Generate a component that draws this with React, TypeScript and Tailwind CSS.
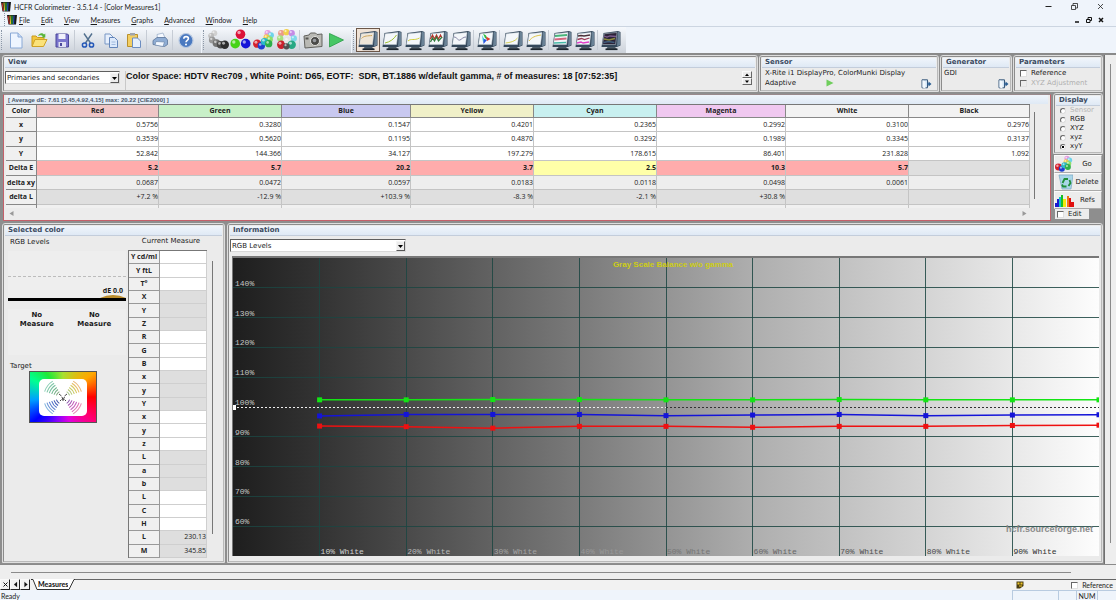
import React from "react";

const ui = "font-['DejaVu_Sans',sans-serif]";
const seg = "font-['Open_Sans',sans-serif]";
const chrome = "font-['Lato',sans-serif]";

function Bars() {
  return (
    <svg width="10" height="11" viewBox="0 0 10 11" aria-hidden="true">
      <path d="M0 1h10l-1 9.500H1.500z" fill="#151515" />
      <path d="M1 2l1.500 8" stroke="#c33" strokeWidth="1" />
      <path d="M3 1.500L3.600 10" stroke="#e8c92c" strokeWidth="1" />
      <path d="M5 1.500V10" stroke="#2fae3b" strokeWidth="1.200" />
      <path d="M7 1.500L6.600 10" stroke="#2d5bd6" strokeWidth="1" />
    </svg>
  );
}

function Ball({ x, y, r, c }: { x: number; y: number; r: number; c: string }) {
  return (
    <g>
      <circle cx={x} cy={y} r={r} fill={c} />
      <circle cx={x - r * 0.3} cy={y - r * 0.35} r={r * 0.35} fill="#fff" opacity="0.6" />
    </g>
  );
}

type BallSpec = [number, number, number, string];
const grayBalls: BallSpec[] = [
  [7, 4, 2.8, "#d0d0d0"], [4, 6.5, 2.8, "#bcbcbc"], [5, 10.5, 3.2, "#989898"],
  [9, 13.5, 3.6, "#747474"], [13, 15, 3.6, "#4c4c4c"], [17, 15, 4, "#2d2d2d"],
];
const rgbBalls: BallSpec[] = [
  [10, 5, 4.6, "#dc1238"], [5, 14, 4.6, "#45d316"], [15, 14, 4.6, "#1414d8"],
];
const mixBalls: BallSpec[] = [
  [14, 4, 3, "#e59be0"], [17, 6, 3, "#6fd3ea"], [13, 8, 3, "#f3c84a"], [16, 10, 3, "#8de06b"],
  [4, 14, 4, "#d61f2c"], [8, 16, 3.5, "#1f3fd0"], [11, 12, 3.5, "#2bb8c8"], [15, 14, 3.5, "#2faf4a"],
];
const ringBalls: BallSpec[] = [
  [5, 4, 3, "#eb9a8c"], [10, 3, 3, "#f2d04b"], [15, 4, 3, "#c58be6"], [4, 9, 3, "#a7e07f"],
  [17, 9, 3, "#7fd8ea"], [5, 15, 4, "#c9202c"], [11, 11, 3.5, "#e6e6e6"], [15, 15, 4, "#27a884"], [10, 16.5, 3, "#515151"],
];

function Balls({ list, w = 22 }: { list: BallSpec[]; w?: number }) {
  return (
    <svg width={w} height={w} viewBox="0 0 21 21" aria-hidden="true">
      {list.map(([x, y, r, c], i) => <Ball key={i} x={x} y={y} r={r} c={c} />)}
    </svg>
  );
}

function Monitor({ fill = "#f4f7fa", children }: { fill?: string; children?: React.ReactNode }) {
  return (
    <svg width="20" height="21" viewBox="0 0 20 21" aria-hidden="true">
      <path d="M2.500 3L17 1L19.500 2v13.500L16 17H0.500z" fill="#34475a" />
      <path d="M17 1.500L19 2.500V15L16 16.500z" fill="#6a8296" />
      <path d="M3.200 3.800L16 2.500L14.500 14.500H1.500z" fill={fill} stroke="#c5d0d9" strokeWidth="0.500" />
      <path d="M6.500 17h7.500l2.500 2.500H5z" fill="#4a5965" />
      <path d="M4.500 19.300h12" stroke="#1c252d" strokeWidth="1.600" />
      {children}
    </svg>
  );
}

const stroke = (d: string, c: string, w = 1) => <path d={d} fill="none" stroke={c} strokeWidth={w} />;

const icons = {
  file: (
    <svg width="20" height="20" viewBox="0 0 20 20">
      <path d="M4.500 3h7.500l4 4v11h-11.500z" fill="#eef5ff" stroke="#8aa9d6" />
      <path d="M12 3v4h4" fill="#c9dbf5" stroke="#8aa9d6" />
    </svg>
  ),
  open: (
    <svg width="20" height="20" viewBox="0 0 20 20">
      <path d="M3 16V6h4l1.500 1.500H15V10" fill="#f2c63d" stroke="#c99a1c" />
      <path d="M3 16.500L6 9.500h12L14.500 16.500z" fill="#fbe27a" stroke="#cfa227" />
      <path d="M9 6c1.500-3.500 4.500-3.500 6-1.500l1.300-1V7.500H12.500l1.300-1.300C12.500 4.800 11 5 9 6z" fill="#58b53b" />
    </svg>
  ),
  save: (
    <svg width="20" height="20" viewBox="0 0 20 20">
      <path d="M4 4h11.500l1 1v12H4z" fill="#7a75cd" stroke="#4b479a" />
      <path d="M6.500 4h7v5h-7z" fill="#f0f1fb" />
      <path d="M6.500 12h7.500v5H6.500z" fill="#dfe0f3" />
      <path d="M8 13h2v3H8z" fill="#4b479a" />
    </svg>
  ),
  cut: (
    <svg width="20" height="20" viewBox="0 0 20 20">
      {stroke("M6 3.500L12.500 13M14 3.500L7.500 13", "#52708f", 1.4)}
      <circle cx="6.500" cy="15" r="2.100" fill="none" stroke="#2558b8" strokeWidth="1.500" />
      <circle cx="13.500" cy="15" r="2.100" fill="none" stroke="#2558b8" strokeWidth="1.500" />
    </svg>
  ),
  copy: (
    <svg width="20" height="20" viewBox="0 0 20 20">
      <path d="M4 4h5l3 3v7H4z" fill="#e6effc" stroke="#7897c5" />
      <path d="M8.500 7.500h5L16.500 10.500v7h-8z" fill="#dce9fb" stroke="#6385ba" />
      {stroke("M10.500 12h4M10.500 14.500h4", "#90add8", 0.8)}
    </svg>
  ),
  paste: (
    <svg width="20" height="20" viewBox="0 0 20 20">
      <path d="M3.500 4.500h10v12h-10z" fill="#f3ce62" stroke="#b9902c" />
      <path d="M6 3h5v2.500H6z" fill="#9fa5ac" />
      <path d="M8.500 8h5l3 3v6.500h-8z" fill="#e5effc" stroke="#6c8dc0" />
    </svg>
  ),
  print: (
    <svg width="20" height="20" viewBox="0 0 20 20">
      <path d="M7 4.500l6-1.500 2 5H7.500z" fill="#f5f9ff" stroke="#92a8c4" strokeWidth="0.700" />
      <path d="M3 10.500l4-3h8.500l2 2.500v4.500l-3 2-11.500-2z" fill="#8fadd4" stroke="#5c7599" strokeWidth="0.800" />
      <path d="M6 11.500l8.500 0.500-1.500 4.500-8-1.500z" fill="#f3f8ff" stroke="#6e88ab" strokeWidth="0.700" />
    </svg>
  ),
  help: (
    <svg width="20" height="20" viewBox="0 0 20 20">
      <circle cx="10" cy="10.500" r="7" fill="#4a79c0" stroke="#b9c9e0" strokeWidth="1.200" />
      {stroke("M7.800 8.800C7.800 5.800 12.400 6 12.400 8.600C12.400 10.400 10 10.200 10 12.200", "#fff", 1.6)}
      <circle cx="10" cy="14.500" r="1" fill="#fff" />
    </svg>
  ),
  camera: (
    <svg width="22" height="20" viewBox="0 0 22 20">
      <path d="M2 6l5-1 1.500-2h5L15 4.500l5-0.500v12.500L3 18z" fill="#b9b9b4" stroke="#62625e" />
      <circle cx="13" cy="11" r="4.500" fill="#4a4a48" stroke="#e2e2de" />
      <circle cx="12.500" cy="10.500" r="1.800" fill="#989ba0" />
      <path d="M3.500 7.500h3v2h-3z" fill="#565652" />
    </svg>
  ),
  play: (
    <svg width="20" height="20" viewBox="0 0 20 20">
      <path d="M3.500 3.500L17.500 10L3.500 17z" fill="#47c765" stroke="#2a9c46" strokeWidth="0.800" />
    </svg>
  ),
};

function Tool({ label, wide, active, children }: { label: string; wide?: boolean; active?: boolean; children: React.ReactNode }) {
  return (
    <button
      type="button"
      aria-label={label}
      className={`flex h-[24px] shrink-0 items-center justify-center ${wide ? "w-6" : "w-[23px]"} ${active ? "border border-[#6b5648] bg-[#efe2d6]" : ""}`}
    >
      {children}
    </button>
  );
}
const Sep = () => <div className="mx-px h-5 w-px shrink-0 bg-[#c6ccd5]" />;
const Grip = () => <div className="mr-[2px] ml-px h-5 w-px shrink-0 border-l border-dotted border-[#8c98a8]" />;

function Band({ children }: { children: React.ReactNode }) {
  return <div className="flex h-full items-center bg-linear-to-b from-[#f6f9fd] to-[#ccd2da] pr-1">{children}</div>;
}

function Panel({ title, className = "", children }: { title: string; className?: string; children: React.ReactNode }) {
  return (
    <section aria-label={title} className={`flex flex-col rounded-t-[2px] border border-[#8c8c8c] border-r-[#b9b9b9] border-b-[#b9b9b9] bg-[#ebebeb] p-px outline outline-1 outline-[#dedede] ${className}`}>
      <h2 className={`${ui} h-[10px] shrink-0 border-b border-[#c3cddb] bg-linear-to-b from-[#f0f5fb] to-[#dfe9f5] pl-[3px] text-[7px] leading-[9px] font-bold whitespace-nowrap text-[#3b4a60]`}>
        {title}
      </h2>
      {children}
    </section>
  );
}

function Pick({ label, value, className }: { label: string; value: string; className: string }) {
  return (
    <div className={`relative ${className}`}>
      <select aria-label={label} defaultValue={value} className={`${ui} block h-[13px] w-full appearance-none border border-[#d8d8d8] border-t-[#5f5f5f] border-l-[#5f5f5f] bg-white pl-px text-[7px] leading-[10px] text-[#222]`}>
        <option>{value}</option>
      </select>
      <span className="pointer-events-none absolute top-[2px] right-[1px] flex h-[10px] w-[9px] items-center justify-center border border-[#f5f5f5] border-r-[#555] border-b-[#555] bg-[#ececec]">
        <svg width="5" height="3" viewBox="0 0 5 3"><path d="M0 0h5L2.500 3z" fill="#000" /></svg>
      </span>
    </div>
  );
}

function Check({ label, disabled }: { label: string; disabled?: boolean }) {
  return (
    <label className={`${ui} flex h-[10px] items-center gap-1 pl-1 text-[7px] whitespace-nowrap ${disabled ? "text-[#b0b0b0]" : "text-[#1a1a1a]"}`}>
      <input type="checkbox" disabled={disabled} className="h-[7px] w-[7px] appearance-none border border-[#e0e0e0] border-t-[#666] border-l-[#666] bg-white checked:bg-[#333] disabled:bg-[#ececec]" />
      {label}
    </label>
  );
}

function Door() {
  return (
    <button type="button" aria-label="Configure" className="block h-[10px] w-[11px]">
      <svg width="11" height="10" viewBox="0 0 11 10">
        <path d="M1 0.800h5.500v8H1z" fill="#d5e6f6" stroke="#39597b" />
        <path d="M1.500 1.200l3 1.300v7L1.500 8.500z" fill="#f2f8fd" />
        <path d="M6 5h2.500" stroke="#2c5f94" strokeWidth="1.400" />
        <path d="M7.500 2.600L10.500 5L7.500 7.400z" fill="#2c5f94" />
      </svg>
    </button>
  );
}

const heads: [string, string][] = [
  ["Red", "bg-[#f0c6c6]"], ["Green", "bg-[#c8f0c8]"], ["Blue", "bg-[#c8c8f0]"], ["Yellow", "bg-[#f0f0c8]"],
  ["Cyan", "bg-[#c8f0f0]"], ["Magenta", "bg-[#f0c8f0]"], ["White", "bg-[#f2f2f2]"], ["Black", "bg-[#f2f2f2]"],
];
const rows: { name: string; tone: string; values: string[] }[] = [
  { name: "x", tone: "bg-white", values: ["0.5756", "0.3280", "0.1547", "0.4201", "0.2365", "0.2992", "0.3100", "0.2976"] },
  { name: "y", tone: "bg-white", values: ["0.3539", "0.5620", "0.1195", "0.4870", "0.3292", "0.1989", "0.3345", "0.3137"] },
  { name: "Y", tone: "bg-white", values: ["52.842", "144.366", "34.127", "197.279", "178.615", "86.401", "231.828", "1.092"] },
  { name: "Delta E", tone: "bg-[#ffacac] font-bold", values: ["5.2", "5.7", "20.2", "3.7", "2.5", "10.3", "5.7", ""] },
  { name: "delta xy", tone: "bg-[#eeeeee]", values: ["0.0687", "0.0472", "0.0597", "0.0183", "0.0118", "0.0498", "0.0061", ""] },
  { name: "delta L", tone: "bg-[#dfdfdf]", values: ["+7.2 %", "-12.9 %", "+103.9 %", "-8.3 %", "-2.1 %", "+30.8 %", "", ""] },
];
function cellTone(name: string, tone: string, i: number) {
  if (name !== "Delta E") return tone;
  if (i === 4) return "bg-[#ffffa8] font-bold";
  if (i === 7) return "bg-[#dfdfdf]";
  return tone;
}

function MeasureTable() {
  return (
    <table className={`${seg} w-full table-fixed border-separate border-spacing-0 border-t border-[#777] text-[7px] text-[#222]`}>
      <colgroup>
        <col className="w-[31px]" /><col className="w-[122px]" /><col className="w-[123px]" /><col className="w-[129px]" /><col className="w-[123px]" />
        <col className="w-[123px]" /><col className="w-[129px]" /><col className="w-[123px]" /><col className="w-[121px]" />
      </colgroup>
      <thead>
        <tr className="h-[13px]">
          <th className="border-r border-b border-[#888] bg-[#f0f0f0] p-0 leading-3">Color</th>
          {heads.map(([h, c]) => <th key={h} className={`border-r border-b border-[#888] p-0 leading-3 ${c}`}>{h}</th>)}
        </tr>
      </thead>
      <tbody>
        {rows.map((r, k) => (
          <tr key={k} className={k % 2 ? "h-[15px]" : "h-[14px]"}>
            <th className="border-r border-b border-[#888] bg-[#f0f0f0] p-0 leading-3 whitespace-nowrap">{r.name}</th>
            {r.values.map((v, i) => (
              <td key={i} className={`border-r border-b border-[#c4c4c4] p-0 text-right leading-3 ${cellTone(r.name, r.tone, i)}`}>{v}</td>
            ))}
          </tr>
        ))}
        <tr className="h-[3px]">
          <th className="border-r border-[#888] bg-[#f0f0f0] p-0" />
          {heads.map(([h]) => <td key={h} className="border-r border-[#c4c4c4] bg-[#f0f0f0] p-0" />)}
        </tr>
      </tbody>
    </table>
  );
}

const current: [string, boolean, string][] = [
  ["Y cd/ml", false, ""], ["Y ftL", false, ""], ["T°", false, ""], ["X", true, ""], ["Y", true, ""], ["Z", true, ""],
  ["R", false, ""], ["G", false, ""], ["B", false, ""], ["x", true, ""], ["y", true, ""], ["Y", true, ""],
  ["x", false, ""], ["y", false, ""], ["z", false, ""], ["L", true, ""], ["a", true, ""], ["b", true, ""],
  ["L", false, ""], ["C", false, ""], ["H", false, ""], ["L", true, "230.13"], ["M", true, "345.85"],
];

function CurrentTable() {
  return (
    <table className={`${seg} h-[308px] w-[79px] table-fixed border-separate border-spacing-0 border-t border-l border-[#777] text-[7px] text-[#222]`}>
      <colgroup><col className="w-[31px]" /><col /></colgroup>
      <tbody>
        {current.map(([n, dim, v], i) => (
          <tr key={i}>
            <th className="border-r border-b border-[#999] bg-[#f0f0f0] p-0 leading-3 whitespace-nowrap">{n}</th>
            <td className={`border-r border-b border-[#cfcfcf] p-0 text-right leading-3 ${dim ? "bg-[#dedede]" : "bg-white"}`}>{v}</td>
          </tr>
        ))}
      </tbody>
    </table>
  );
}

function Target() {
  const arcs = [0, 1, 2, 3, 4, 5];
  const quads: [number, string[]][] = [
    [-38, ["#e8b878", "#e8c068", "#d8c860", "#c8cc68", "#b8c878", "#a8c890"]],
    [38, ["#e890b8", "#e070b8", "#c868c0", "#c058b8", "#a858b8", "#905cb0"]],
    [142, ["#88b8e0", "#7098d8", "#6080d0", "#5070c8", "#4860b8", "#4858a8"]],
    [218, ["#90d0b8", "#80c8a8", "#78c0a0", "#70b890", "#78b088", "#80a880"]],
  ];
  return (
    <div className="flex h-[52px] w-[68px] items-center justify-center border border-[#555] bg-[conic-gradient(from_0deg_at_50%_50%,#a8e030,#ffa800_52deg,#ff0000_90deg,#ff0078_128deg,#e000e0_165deg,#8000ff_195deg,#0000ff_230deg,#00a0ff_265deg,#00ff90_300deg,#20e838_325deg,#a8e030)]">
      <svg width="48" height="37" viewBox="0 0 48 37" className="rounded-[5px] bg-white" aria-label="Target">
        {quads.map(([rot, cs]) => (
          <g key={rot} transform={`translate(24 18.500) rotate(${rot})`}>
            {arcs.map((a) => {
              const r = 7 + a * 2.5;
              return <path key={a} d={`M${r * 0.93} ${-r * 0.34}A${r} ${r} 0 0 1 ${r * 0.93} ${r * 0.34}`} fill="none" stroke={cs[5 - a]} strokeWidth="1.100" />;
            })}
          </g>
        ))}
        <path d="M20 15l2.500 2M28 15l-2.500 2M21 22l1.500-1.500M27 22l-1.500-1.500M23 18l1 3 1.500-3M24 21v1" fill="none" stroke="#333" strokeWidth="0.900" />
      </svg>
    </div>
  );
}

const series: [string, number[]][] = [
  ["#ee1111", [93.6, 93.4, 92.9, 93.5, 93.5, 93.2, 93.5, 93.5, 93.8, 93.9]],
  ["#1414d8", [97, 97.5, 97.5, 97.5, 97.1, 97.3, 97.5, 97.1, 97.3, 97.4]],
  ["#14e414", [102.4, 102.4, 102.5, 102.5, 102.4, 102.4, 102.5, 102.4, 102.4, 102.4]],
];
const tens = [1, 2, 3, 4, 5, 6, 7, 8, 9];
const axisInk = ["#d0d0d0", "#b8b8b8", "#a4a4a4", "#989898", "#757575", "#666666", "#505050", "#484848", "#303030"];
const py = (v: number) => `${150 - v}%`;

function Chart() {
  return (
    <svg className="min-h-[298px] w-full flex-1" role="img" aria-label="Gray Scale Balance w/o gamma">
      <defs>
        <linearGradient id="ramp">
          <stop offset="0" stopColor="#1e1e1e" />
          <stop offset="0.1" stopColor="#333" />
          <stop offset="0.2" stopColor="#4a4a4a" />
          <stop offset="0.4" stopColor="#7a7a7a" />
          <stop offset="0.6" stopColor="#aeaeae" />
          <stop offset="0.8" stopColor="#d4d4d4" />
          <stop offset="1" stopColor="#fdfdfd" />
        </linearGradient>
      </defs>
      <rect width="100%" height="100%" fill="url(#ramp)" />
      {tens.map((t) => (
        <g key={t} stroke="#1c4642" strokeWidth="1" opacity="0.85" shapeRendering="crispEdges">
          <line x1={`${t * 10}%`} x2={`${t * 10}%`} y1="0" y2="100%" />
          {t !== 5 && <line x1="0" x2="100%" y1={`${t * 10}%`} y2={`${t * 10}%`} />}
        </g>
      ))}
      <line x1="0" x2="50%" y1="50%" y2="50%" stroke="#eee" strokeDasharray="2 2" shapeRendering="crispEdges" />
      <line x1="50%" x2="100%" y1="50%" y2="50%" stroke="#333" strokeDasharray="2 2" shapeRendering="crispEdges" />
      <svg x="0" y="50%" overflow="visible"><rect y="-2" width="3" height="5" fill="#fff" /></svg>
      {series.map(([c, vs]) => (
        <g key={c} stroke={c} fill={c}>
          {vs.slice(1).map((v, i) => (
            <line key={i} x1={`${(i + 1) * 10}%`} y1={py(vs[i])} x2={`${(i + 2) * 10}%`} y2={py(v)} strokeWidth="1.500" />
          ))}
          {vs.map((v, i) => (
            <svg key={i} x={`${(i + 1) * 10}%`} y={py(v)} overflow="visible"><rect x="-2.500" y="-2.500" width="5" height="5" stroke="none" /></svg>
          ))}
        </g>
      ))}
      <g className="font-['Liberation_Mono',monospace] text-[8px]">
        {tens.map((t) => (
          <text key={t} x="2" y={`${t * 10}%`} dy="-2" fill="#c4c4c4">{150 - t * 10}%</text>
        ))}
        {tens.map((t) => (
          <text key={t} x={`${t * 10}%`} y="100%" dx="1" dy="-2" fill={axisInk[t - 1]}>{t * 10}% White</text>
        ))}
      </g>
      <text x="50.800%" y="9" textAnchor="middle" fill="#cdcd14" className="font-['Liberation_Sans',sans-serif] text-[8px] font-bold">Gray Scale Balance w/o gamma</text>
      <text x="99.300%" y="92%" textAnchor="end" fill="#8a8a8a" className="font-['Liberation_Sans',sans-serif] text-[9px] font-bold">hcfr.sourceforge.net</text>
    </svg>
  );
}

function SideButton({ label, children }: { label: string; children: React.ReactNode }) {
  return (
    <button type="button" className={`${ui} flex h-[18px] items-center border border-[#fafafa] border-r-[#aaa] border-b-[#aaa] bg-[#ececec] text-[7px] text-[#1a1a1a]`}>
      {children}
      <span className="flex-1 text-center">{label}</span>
    </button>
  );
}

const monitorTools = {
  a: <Monitor fill="#efe6d8">{stroke("M3.500 8.500C6 5.500 10 6 14 5.500", "#cba45c")}</Monitor>,
  b: <Monitor>{stroke("M3 13C8 12 12 9 14.500 5", "#9fc02f")}</Monitor>,
  c: <Monitor>{stroke("M3 11C6 8 9 11 14.500 8", "#d3cf3a")}</Monitor>,
  d: <Monitor>{stroke("M2.500 9l2-4 2 4 2-4 2 4 2-4 1.500 3", "#b4342a", 1.2)}{stroke("M2.500 12l2-4 2 3 2-4 2 4 3.500-4", "#2e7a3a", 1.2)}</Monitor>,
  e: <Monitor>{stroke("M3 7C6 7 7 11 9 10S12 7 15 7", "#8686a6")}</Monitor>,
  f: <Monitor><path d="M6 3.500l3 2 1.500 4L8 8z" fill="#27c23c" /><path d="M9 6.500l4.500 2.500-3.500 2z" fill="#e5392c" /><path d="M6 8.500l4 1.500-3.500 4z" fill="#2955e0" /><path d="M5 5l2 4-1 3z" fill="#30c8d8" /></Monitor>,
  g: <Monitor>{stroke("M2.500 13C7 12.500 12 11.500 14.500 8", "#d6cf55")}</Monitor>,
  h: <Monitor>{stroke("M3 11C6 7 9 6 15 5", "#dcc44a")}</Monitor>,
  i: <Monitor>{stroke("M3 6l12-1", "#48b47a", 1.8)}{stroke("M2.500 9.500l12-1", "#d4667f", 1.8)}{stroke("M2 13l12-0.500", "#44b8a6", 1.5)}</Monitor>,
  j: <Monitor>{stroke("M3 6l3-0.500 3 0.500 6-1", "#4a3038", 1.3)}{stroke("M2.500 9.500l4-1 3 1 5-1.500", "#9a3a55", 1.3)}{stroke("M2 13l4-1 2 1 6-1", "#e03fc8", 1.3)}</Monitor>,
  k: <Monitor fill="#2b2338">{stroke("M3 6l3 1 3-1 6 0.500", "#7a5c8c", 1.3)}{stroke("M3 9l5 1 6-1.500", "#8c8c3c", 1.3)}{stroke("M2.500 12.500l5-1 6 1", "#3f5c7c", 1.3)}</Monitor>,
};

const menus = ["File", "Edit", "View", "Measures", "Graphs", "Advanced", "Window", "Help"];

export default function App() {
  return (
    <div className={`${ui} flex min-h-screen flex-col bg-[#eff4fb] text-[7px] leading-[10px] text-[#1a1a1a]`}>
      <header className={chrome}>
        <div className="flex h-[13px] items-center gap-[3px] pl-[1px]">
          <Bars />
          <h1 className="flex-1 text-[7px] whitespace-nowrap">HCFR Colorimeter - 3.5.1.4 - [Color Measures1]</h1>
          <div className="flex items-center gap-[19px] pr-3">
            <button type="button" aria-label="Minimize"><svg width="7" height="7"><path d="M0.500 3.500h6" stroke="#222" /></svg></button>
            <button type="button" aria-label="Restore"><svg width="7" height="7"><path d="M0.500 2.500h4v4h-4zM2 2.500V0.500h4.500v4.500H5" fill="none" stroke="#222" strokeWidth="0.800" /></svg></button>
            <button type="button" aria-label="Close"><svg width="7" height="7"><path d="M1 1l5 5M6 1L1 6" stroke="#222" strokeWidth="0.800" /></svg></button>
          </div>
        </div>
        <nav className="flex h-[14px] items-center border-b border-[#ccd5e1] pl-[3px]">
          <Grip />
          <Bars />
          <ul className="flex flex-1 gap-[11px] pl-[2px]">
            {menus.map((m) => (
              <li key={m}><button type="button" className="block whitespace-nowrap"><span className="underline">{m[0]}</span>{m.slice(1)}</button></li>
            ))}
          </ul>
          <div className="flex items-center gap-[6px] pr-3">
            <button type="button" aria-label="Minimize document"><svg width="6" height="6"><path d="M1 5h4" stroke="#111" strokeWidth="1.500" /></svg></button>
            <button type="button" aria-label="Restore document"><svg width="6" height="6"><path d="M0.500 2.500h3.500v3h-3.500zM2 2.500V0.500h3.500v3H4" fill="none" stroke="#111" /></svg></button>
            <button type="button" aria-label="Close document"><svg width="6" height="6"><path d="M1 1l4 4M5 1L1 5" stroke="#111" strokeWidth="1.500" /></svg></button>
          </div>
        </nav>
        <div role="toolbar" className="flex h-[26px] gap-px">
          <Band>
            <Grip />
            <Tool label="New">{icons.file}</Tool><Tool label="Open">{icons.open}</Tool><Tool label="Save">{icons.save}</Tool><Sep />
            <Tool label="Cut">{icons.cut}</Tool><Tool label="Copy">{icons.copy}</Tool><Tool label="Paste">{icons.paste}</Tool><Sep />
            <Tool label="Print">{icons.print}</Tool><Sep />
            <Tool label="Help">{icons.help}</Tool>
          </Band>
          <Band>
            <Grip />
            <Tool label="Grays"><Balls list={grayBalls} /></Tool><Tool label="Primaries"><Balls list={rgbBalls} /></Tool>
            <Tool label="Saturations"><Balls list={mixBalls} /></Tool><Tool label="Full set"><Balls list={ringBalls} /></Tool><Sep />
            <Tool label="Capture">{icons.camera}</Tool><Tool label="Run">{icons.play}</Tool>
          </Band>
          <Band>
            <Grip />
            <Tool label="RGB levels" active wide>{monitorTools.a}</Tool><Tool label="Luminance">{monitorTools.b}</Tool>
            <Tool label="Gamma">{monitorTools.c}</Tool><Tool label="Near black">{monitorTools.d}</Tool><Tool label="Temperature">{monitorTools.e}</Tool><Sep />
            <Tool label="CIE">{monitorTools.f}</Tool><Sep />
            <Tool label="Shift">{monitorTools.g}</Tool><Tool label="Near white">{monitorTools.h}</Tool><Sep />
            <Tool label="Saturation luminance">{monitorTools.i}</Tool><Tool label="Saturation shift">{monitorTools.j}</Tool><Sep />
            <Tool label="Measures">{monitorTools.k}</Tool>
          </Band>
        </div>
      </header>

      <div className="flex flex-1 border-t-2 border-[#8a8a8a] bg-[#eeeeee]">
        <main className="flex min-w-0 flex-1 flex-col gap-[3px] border-r border-[#707070] bg-[#8e8e8e] p-[2px] pt-px pl-[3px]">
          <div className="flex h-[35px] gap-[3px]">
            <Panel title="View" className="min-w-0 flex-1">
              <div className="flex flex-1 items-start gap-[5px] pt-[3px]">
                <Pick label="View" value="Primaries and secondaries" className="w-[115px] shrink-0" />
                <div className="flex h-[19px] min-w-0 flex-1 items-start border-l border-[#c8c8c8] pr-[3px]">
                  <p className="min-w-0 flex-1 font-['Liberation_Sans',sans-serif] text-[9px] leading-[10px] font-bold whitespace-pre text-[#111]">
                    {"Color Space: HDTV Rec709 , White Point: D65, EOTF:  SDR, BT.1886 w/default gamma, # of measures: 18 [07:52:35]"}
                  </p>
                  <div className="flex flex-col">
                    {["M0 3h4L2 0.500z", "M0 0.500h4L2 3z"].map((d, i) => (
                      <button key={d} type="button" aria-label={i ? "Next" : "Previous"} className="flex h-[7px] w-[10px] items-center justify-center border border-[#fafafa] border-r-[#666] border-b-[#666] bg-[#ececec]">
                        <svg width="4" height="4"><path d={d} fill="#000" /></svg>
                      </button>
                    ))}
                  </div>
                </div>
              </div>
            </Panel>
            <Panel title="Sensor" className="w-[178px]">
              <div className="flex flex-1 justify-between pr-1 pl-[3px]">
                <div>
                  <p className="whitespace-nowrap">X-Rite i1 DisplayPro, ColorMunki Display</p>
                  <p className="flex items-center gap-[30px]">Adaptive<svg width="8" height="8"><path d="M0.500 0.500l7 3.500-7 3.500z" fill="#6fce5c" /></svg></p>
                </div>
                <div className="self-end"><Door /></div>
              </div>
            </Panel>
            <Panel title="Generator" className="w-[70px]">
              <div className="flex flex-1 justify-between pl-px"><p>GDI</p><div className="self-end"><Door /></div></div>
            </Panel>
            <Panel title="Parameters" className="w-[88px]">
              <Check label="Reference" />
              <Check label="XYZ Adjustment" disabled />
            </Panel>
          </div>

          <div className="flex gap-[3px]">
            <div className="flex min-w-0 flex-1 flex-col self-start border border-[#c4606a] border-t-[#9a8a8c] bg-[#ececec] px-[2px] pb-px">
              <h2 className="h-[9px] overflow-hidden bg-linear-to-b from-[#f0f5fb] to-[#dfe9f5] pl-[2px] font-['Liberation_Sans',sans-serif] text-[6px] leading-[11px] font-bold whitespace-pre text-[#4a5668]">{"[ Average dE: 7.61 [3.45,4.92,4.15] max: 20.22 [CIE2000] ]"}</h2>
              <div className="flex">
                <div className="min-w-0 flex-1">
                  <MeasureTable />
                  <div className="flex h-[11px] items-center justify-between px-[3px]">
                    <svg width="5" height="5"><path d="M4.500 0v5L0.500 2.500z" fill="#999" /></svg>
                    <svg width="5" height="5"><path d="M0.500 0v5L4.500 2.500z" fill="#999" /></svg>
                  </div>
                </div>
                <div className="flex w-[18px] pt-2 pb-5 pl-1"><div className="w-px bg-[#777]" /></div>
              </div>
            </div>
            <aside className="flex w-[48px] flex-col">
              <Panel title="Display" className="mb-[2px] h-[59px]">
                <fieldset className="flex flex-col pl-1">
                  {["Sensor", "RGB", "XYZ", "xyz", "xyY"].map((m, i) => (
                    <label key={m} className={`flex h-[9px] items-center gap-1 leading-[9px] ${i === 0 ? "text-[#b5b5b5]" : ""}`}>
                      <input type="radio" name="display" disabled={i === 0} defaultChecked={i === 4} className="h-[6px] w-[6px] appearance-none rounded-full border border-[#ddd] border-t-[#666] border-l-[#666] bg-white checked:bg-[radial-gradient(#000_35%,#fff_45%)]" />
                      {m}
                    </label>
                  ))}
                </fieldset>
              </Panel>
              <SideButton label="Go"><Balls list={mixBalls} w={18} /></SideButton>
              <SideButton label="Delete">
                <svg width="18" height="16" viewBox="0 0 18 16">
                  <path d="M4 1h14l-2 14H7z" fill="#a9d6e8" stroke="#79a8c4" strokeWidth="0.700" />
                  <path d="M7.500 9l2-4h3.500M14.500 6l1 3-2 3M11.500 12.500h-3.500l-1-2" fill="none" stroke="#1f8f3a" strokeWidth="1.800" />
                </svg>
              </SideButton>
              <SideButton label="Refs">
                <svg width="19" height="13" viewBox="0 0 19 13">
                  <path d="M0 13V9h2V5h2v8z" fill="#1a1ad0" /><path d="M4 13V3h2v10z" fill="#10c0d0" /><path d="M6 13V1h2v12z" fill="#18c020" />
                  <path d="M8 13V5h3v8z" fill="#f0e810" /><path d="M12 13V2h2v11z" fill="#f07810" /><path d="M14 13V4h2v4h3v5z" fill="#e01010" />
                </svg>
              </SideButton>
              <label className="ml-px flex h-[10px] w-[34px] items-center gap-1 bg-[#ececec] pl-[2px]">
                <input type="checkbox" className="h-[7px] w-[7px] appearance-none border border-[#e0e0e0] border-t-[#666] border-l-[#666] bg-white checked:bg-[#333]" />
                Edit
              </label>
            </aside>
          </div>

          <div className="flex flex-1 gap-1">
            <Panel title="Selected color" className="w-[221px] shrink-0">
              <div className="flex flex-1">
                <div className="flex w-[123px] flex-col pr-[2px] pl-[3px]">
                  <p className="h-[15px] pt-px pl-[2px]">RGB Levels</p>
                  <div className="flex h-[50px] flex-col bg-[#eeeeee]">
                    <div className="h-[26px] border-b border-dashed border-[#bcbcbc]" />
                    <div className="flex flex-1 flex-col items-end justify-end">
                      <span className={`${seg} pr-[3px] text-[7px] leading-[9px] font-bold`}>dE 0.0</span>
                      <svg width="26" height="3"><path d="M0 3Q13-3 26 3z" fill="#b98b2c" /></svg>
                    </div>
                    <div className="h-[3px] bg-black" />
                  </div>
                  <div className="mt-2 grid h-[46px] grid-cols-2 bg-[#eeeeee] pt-[2px] pr-[3px] text-center text-[7px] leading-[9px] font-bold">
                    <p>No<br />Measure</p>
                    <p>No<br />Measure</p>
                  </div>
                  <p className="pt-[6px] pl-[2px]">Target</p>
                  <div className="pl-[21px]"><Target /></div>
                </div>
                <div className="flex flex-1 flex-col">
                  <p className="h-[14px] pr-2 text-center whitespace-nowrap">Current Measure</p>
                  <div className="flex">
                    <CurrentTable />
                    <div className="flex pt-[11px] pb-6 pl-[5px]"><div className="w-px bg-[#777]" /></div>
                  </div>
                </div>
              </div>
            </Panel>
            <Panel title="Information" className="min-w-0 flex-1">
              <Pick label="Graph" value="RGB Levels" className="mt-[3px] w-[176px]" />
              <div className="mt-[4px] mr-px mb-[4px] ml-[2px] flex flex-1 flex-col border-t-2 border-l border-[#777]">
                <Chart />
              </div>
            </Panel>
          </div>
        </main>
        <div className="flex w-[11px] pt-[9px] pb-[21px] pl-[5px]"><div className="w-px bg-[#8a8a8a]" /></div>
      </div>

      <div className="h-[15px] border-t border-[#8a8a8a] bg-[#eeeeee] pt-[7px] pr-[45px] pl-[11px]"><div className="h-px bg-[#8a8a8a]" /></div>

      <div className={`${chrome} flex h-[11px] bg-[#f2f2f2]`}>
        {["M1.500 1.500l4 4M5.500 1.500l-4 4", "M5 1v5L2 3.500z", "M2.500 1v5L5.500 3.500z"].map((d, i) => (
          <button key={d} type="button" aria-label={["Close tab", "Scroll left", "Scroll right"][i]} className="flex w-[10px] items-center justify-center border border-[#fafafa] border-r-[#222] border-b-[#222]">
            <svg width="7" height="7"><path d={d} fill="#111" stroke="#111" strokeWidth={i ? 0.2 : 1} /></svg>
          </button>
        ))}
        <div role="tablist" className="flex pl-px">
          <svg width="7" height="11" className="bg-[#f2f2f2]"><path d="M2 0L6 10.500H7V0z" fill="#fff" /><path d="M0 0.500h2L6 10.500h1" fill="none" stroke="#333" /></svg>
          <button role="tab" aria-selected="true" type="button" className="border-b border-[#333] bg-white text-[7px] leading-[10px] font-black">Measures</button>
          <svg width="7" height="11"><path d="M0 0H6L1 10.500H0z" fill="#fff" /><path d="M0 10.500h1L6 0.500h1" fill="none" stroke="#333" /></svg>
        </div>
        <div className="flex flex-1 items-center justify-end border-t border-[#666] pr-[3px]">
          <svg width="8" height="8" className="mr-[47px]"><path d="M0.500 0.500h7v4.500L4 7.500h-3.500z" fill="#4a3c10" /><path d="M1.500 1.500h2v2h-2zM4.500 1.500h2v2h-2zM3 4.500h3v1H3z" fill="#f0c828" /></svg>
          <label className="flex items-center gap-1 text-[7px] leading-[9px]">
            <input type="checkbox" className="h-[7px] w-[7px] appearance-none border border-[#e0e0e0] border-t-[#666] border-l-[#666] bg-white checked:bg-[#333]" />
            Reference
          </label>
        </div>
      </div>

      <footer className={`${chrome} flex h-3 items-center pl-px text-[7px]`}>
        <p className="flex-1">Ready</p>
        <div className="h-full w-[46px] border-t border-l border-[#b9cbe0]" />
        <div className="h-full w-[18px] border-t border-l border-[#b9cbe0]" />
        <p className="h-full w-[21px] border-t border-l border-[#b9cbe0] text-center leading-[11px]">NUM</p>
        <div className="h-full w-[19px] border-t border-l border-[#b9cbe0]" />
      </footer>
    </div>
  );
}
